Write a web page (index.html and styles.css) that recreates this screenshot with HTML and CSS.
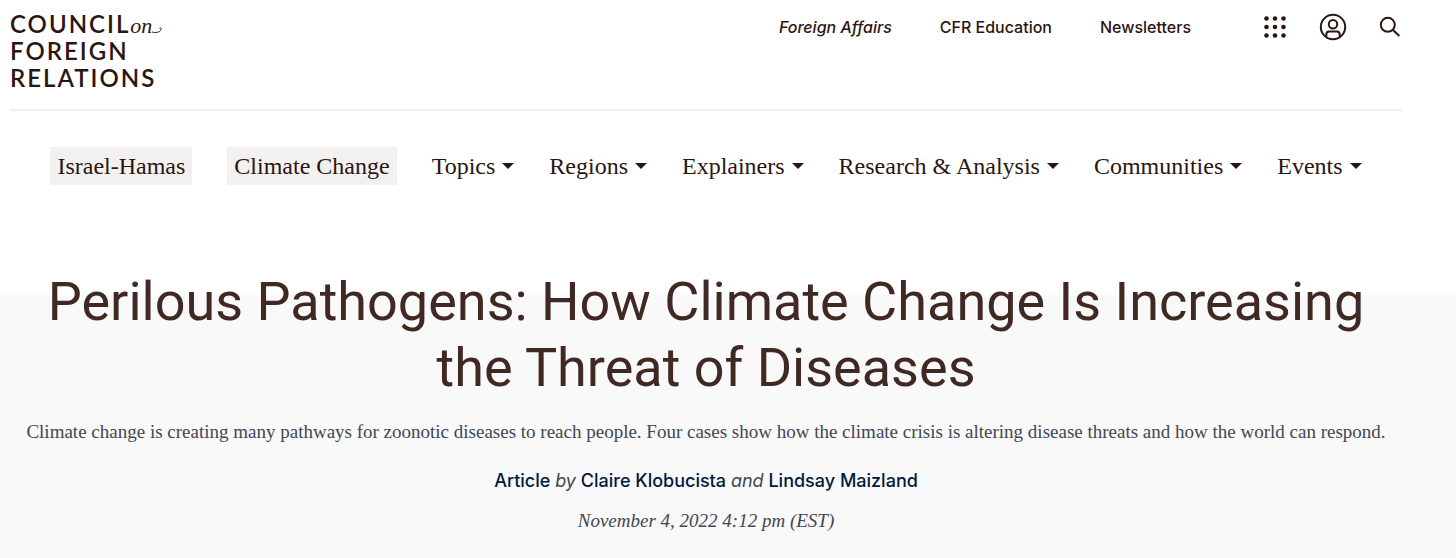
FILE: index.html
```html
<!DOCTYPE html>
<html lang="en">
<head>
<meta charset="utf-8">
<meta name="viewport" content="width=device-width, initial-scale=1">
<title>Perilous Pathogens: How Climate Change Is Increasing the Threat of Diseases</title>
<link rel="stylesheet" href="styles.css">
</head>
<body>
<header class="site-header">
  <div class="top-bar">
    <a class="logo" href="#" aria-label="Council on Foreign Relations">
      <span class="logo-line">COUNCIL<em class="logo-on">on</em><svg class="logo-swash" viewBox="0 0 10 8" aria-hidden="true"><path d="M0 7C3.500 8 8.200 7.500 9 4.500C9.300 3 8.400 2.200 7.500 3"/></svg></span>
      <span class="logo-line">FOREIGN</span>
      <span class="logo-line">RELATIONS</span>
    </a>
    <nav class="utility" aria-label="Utility">
      <a href="#"><em>Foreign Affairs</em></a>
      <a href="#">CFR Education</a>
      <a href="#">Newsletters</a>
      <div class="tools">
        <button class="tool" type="button" aria-label="All sites">
          <svg class="icon-grid" viewBox="0 0 24 24"><circle cx="3.500" cy="3.500" r="2.300"/><circle cx="12" cy="3.500" r="2.300"/><circle cx="20.500" cy="3.500" r="2.300"/><circle cx="3.500" cy="12" r="2.300"/><circle cx="12" cy="12" r="2.300"/><circle cx="20.500" cy="12" r="2.300"/><circle cx="3.500" cy="20.500" r="2.300"/><circle cx="12" cy="20.500" r="2.300"/><circle cx="20.500" cy="20.500" r="2.300"/></svg>
        </button>
        <button class="tool" type="button" aria-label="Account">
          <svg class="icon-user" viewBox="0 0 28 28"><circle cx="14" cy="14" r="12.200"/><circle cx="14" cy="11.300" r="4.200"/><path d="M7.300 24V21.500C7.300 19.500 8.500 18.600 10.300 18.600H17.700C19.500 18.600 20.700 19.500 20.700 21.500V24"/></svg>
        </button>
        <button class="tool" type="button" aria-label="Search">
          <svg class="icon-search" viewBox="0 0 22 22"><circle cx="8.800" cy="8.800" r="7"/><path d="M13.800 13.800L20.300 20"/></svg>
        </button>
      </div>
    </nav>
  </div>
  <nav class="main-nav" aria-label="Main">
    <a class="featured" href="#">Israel-Hamas</a>
    <a class="featured" href="#">Climate Change</a>
    <button class="menu" type="button">Topics</button>
    <button class="menu" type="button">Regions</button>
    <button class="menu" type="button">Explainers</button>
    <button class="menu" type="button">Research &amp; Analysis</button>
    <button class="menu" type="button">Communities</button>
    <button class="menu" type="button">Events</button>
  </nav>
</header>
<main class="hero">
  <h1 class="title">Perilous Pathogens: How Climate Change Is Increasing the Threat of Diseases</h1>
  <p class="summary">Climate change is creating many pathways for zoonotic diseases to reach people. Four cases show how the climate crisis is altering disease threats and how the world can respond.</p>
  <p class="byline"><span class="kind">Article</span> <em>by</em> <a href="#">Claire Klobucista</a> <em>and</em> <a href="#">Lindsay Maizland</a></p>
  <p class="date"><time datetime="2022-11-04T16:12">November 4, 2022 4:12 pm (EST)</time></p>
</main>
</body>
</html>
```

FILE: styles.css
```css
:root {
  --ink: #2b1511;
  --title: #402823;
  --navy: #001a3d;
  --slate: #414754;
  --sans: Inter, "Liberation Sans", sans-serif;
  --display: Roboto, "Liberation Sans", sans-serif;
  --serif: "Liberation Serif", serif;
}

* {
  box-sizing: border-box;
}

body {
  margin: 0;
  min-height: 100vh;
  display: flex;
  flex-direction: column;
  background: #fff;
  color: var(--ink);
  font-family: var(--sans);
}

a {
  color: inherit;
  text-decoration: none;
}

button {
  padding: 0;
  border: 0;
  background: none;
  color: inherit;
  font: inherit;
  cursor: pointer;
}

.site-header {
  padding: 10px 54px 0 10px;
}

.top-bar {
  display: flex;
  justify-content: space-between;
  align-items: flex-start;
  padding-bottom: 18px;
  border-bottom: 2px solid #efefef;
}

.logo {
  display: flex;
  flex-direction: column;
  font: 600 24px/27px Lato, sans-serif;
  letter-spacing: 2px;
}

.logo-line {
  display: flex;
  align-items: baseline;
  height: 27px;
}

.logo-on {
  font: italic 22px/27px var(--serif);
  letter-spacing: 0;
}

.logo-swash {
  width: 10px;
  height: 8px;
  fill: none;
  stroke: var(--ink);
  stroke-width: 1;
}

.utility {
  display: flex;
  align-items: center;
  gap: 48px;
  min-height: 34px;
  padding-right: 1px;
  font-size: 16px;
  font-weight: 500;
}

.tools {
  display: flex;
  align-items: center;
  gap: 32px;
  padding-left: 24px;
}

.tool {
  display: flex;
}

.icon-grid {
  width: 24px;
  height: 24px;
  fill: var(--ink);
}

.icon-user,
.icon-search {
  fill: none;
  stroke: var(--ink);
  stroke-width: 2;
}

.icon-user {
  width: 28px;
  height: 28px;
}

.icon-search {
  width: 22px;
  height: 22px;
}

.main-nav {
  display: flex;
  justify-content: center;
  align-items: center;
  gap: 35px;
  padding: 36px 0 22px;
  font: 24px/38px var(--serif);
  white-space: nowrap;
}

.featured {
  padding: 0 7px;
  background: #f3f1ef;
}

.menu {
  display: flex;
  align-items: center;
  gap: 7px;
}

.menu::after {
  content: "";
  border: 6px solid transparent;
  border-top-color: var(--ink);
  border-bottom: 0;
}

.hero {
  flex: 1;
  padding: 62px 54px 24px 10px;
  background: linear-gradient(#fff 88px, #f9f9f9 88px);
  text-align: center;
}

.title {
  margin: 0;
  color: var(--title);
  font-family: var(--display);
  font-size: 54px;
  font-weight: 400;
  line-height: 66px;
}

.summary {
  margin: 16px 0 0;
  color: var(--slate);
  font: 19px/30px var(--serif);
}

.byline {
  margin: 20px 0 0;
  color: var(--navy);
  font-size: 18px;
  font-weight: 500;
  line-height: 28px;
}

.byline em {
  color: var(--slate);
  font-weight: 400;
}

.date {
  margin: 12px 0 0;
  color: var(--slate);
  font: italic 19px/28px var(--serif);
}
```
